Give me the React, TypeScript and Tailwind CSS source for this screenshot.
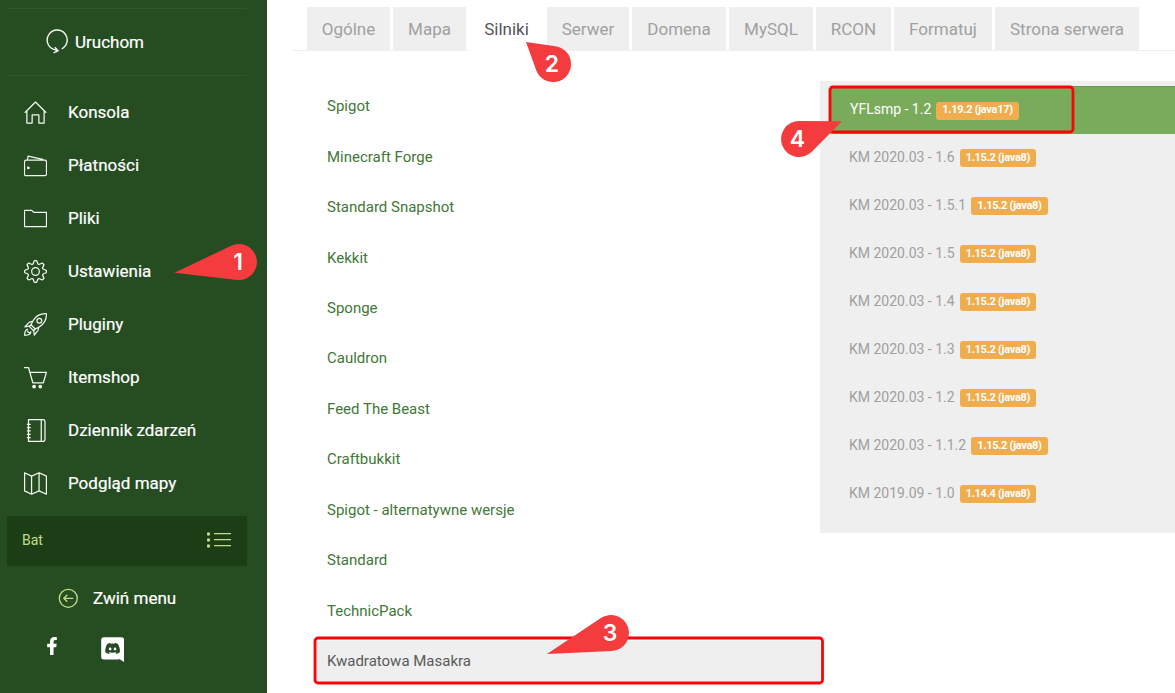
import type { ReactNode } from "react";
import { FaFacebookF, FaDiscord } from "react-icons/fa";

function Icon({ children }: { children: ReactNode }) {
  return (
    <svg width="23" height="23" viewBox="0 0 24 24" fill="none" stroke="#f4f7f3" strokeWidth="1.3" strokeLinejoin="round" className="shrink-0">
      {children}
    </svg>
  );
}

function gearPath() {
  const pts: string[] = [];
  for (let i = 0; i < 8; i++) {
    const a = (i * Math.PI) / 4;
    const p = (r: number, d: number) =>
      `${(12 + r * Math.sin(a + d)).toFixed(2)} ${(12 - r * Math.cos(a + d)).toFixed(2)}`;
    pts.push(`${i ? "L" : "M"}${p(8.7, -0.27)}L${p(11.2, -0.12)}Q${p(11.6, 0)} ${p(11.2, 0.12)}L${p(8.7, 0.27)}Q${p(7.6, 0.39)} ${p(8.7, 0.51)}`);
  }
  return pts.join("") + "Z";
}

const menu: { label: string; icon: ReactNode }[] = [
  { label: "Konsola", icon: <path d="M.8 12.3 12 1.1l11.200 11.200M3 10.500V23h5.500v-8.500h7V23H21V10.500" /> },
  {
    label: "Płatności",
    icon: (
      <>
        <path d="M3.500 6.500 4.300 2.200l15.200 3.300v1M2.500 6.500h19q2 0 2 2V21q0 1.500-1.500 1.500H2Q.5 22.500.5 21V8.500q0-2 2-2Z" />
        <circle cx="4.500" cy="14.500" r=".8" fill="#f4f7f3" />
      </>
    ),
  },
  { label: "Pliki", icon: <path d="M.5 3.500H8l2.200 2h13.300v15H.5Z" /> },
  {
    label: "Ustawienia",
    icon: (
      <>
        <path d={gearPath()} />
        <circle cx="12" cy="12" r="4" />
      </>
    ),
  },
  {
    label: "Pluginy",
    icon: (
      <>
        <path d="M23.300.7Q14 .3 9.500 8L7.300 12.200l4.500 4.500L16 14.500Q24 9.500 23.300.7ZM9.200 8.700Q6 8.700 4.500 10.500L.9 14.400l4-.7 2.900-1.200M15.300 14.800q0 3.200-1.800 4.700l-2.700 3.600-.6-4 1.200-2.700M7.300 12.200 5.500 14l4.500 4.500 1.800-1.800M4.200 16.800Q.6 17.500.7 23.300q5.800.1 6.500-3.500-1 1-2.200.5-1.500-.8-1.200-2" />
        <circle cx="16" cy="8" r="2.500" />
      </>
    ),
  },
  {
    label: "Itemshop",
    icon: (
      <>
        <path d="M0 1.600h4.700l4.500 15.900h11L23.400 6.600H6.200" />
        <circle cx="10.500" cy="21.500" r="1.300" fill="#fff" />
        <circle cx="17" cy="21.500" r="1.300" fill="#fff" />
      </>
    ),
  },
  {
    label: "Dziennik zdarzeń",
    icon: <path d="M4.700.6h15q2.200 0 2.200 2v18.800q0 2-2.200 2h-15ZM18 .6v22.800M3 5.500h4M3 9h4M3 12.500h4M3 16h4M3 19.500h4" />,
  },
  {
    label: "Podgląd mapy",
    icon: <path d="m.6.8 7.300 3.500L15.700.8l7.700 3.500v18.900l-7.700-3.500-7.800 3.500-7.300-3.500ZM7.900 4.300v18.900M15.700.8v18.900" />,
  },
];

const tabs = [
  { label: "Ogólne", width: "w-[83px]" },
  { label: "Mapa", width: "w-[73px]" },
  { label: "Silniki", width: "w-[75px]" },
  { label: "Serwer", width: "w-[82px]" },
  { label: "Domena", width: "w-[94px]" },
  { label: "MySQL", width: "w-[84px]" },
  { label: "RCON", width: "w-[75px]" },
  { label: "Formatuj", width: "w-[98px]" },
  { label: "Strona serwera", width: "w-[144px]" },
];

const engines = [
  "Spigot", "Minecraft Forge", "Standard Snapshot", "Kekkit", "Sponge", "Cauldron",
  "Feed The Beast", "Craftbukkit", "Spigot - alternatywne wersje", "Standard", "TechnicPack", "Kwadratowa Masakra",
];

const versions = [
  ["YFLsmp - 1.2", "1.19.2 (java17)"],
  ["KM 2020.03 - 1.6", "1.15.2 (java8)"],
  ["KM 2020.03 - 1.5.1", "1.15.2 (java8)"],
  ["KM 2020.03 - 1.5", "1.15.2 (java8)"],
  ["KM 2020.03 - 1.4", "1.15.2 (java8)"],
  ["KM 2020.03 - 1.3", "1.15.2 (java8)"],
  ["KM 2020.03 - 1.2", "1.15.2 (java8)"],
  ["KM 2020.03 - 1.1.2", "1.15.2 (java8)"],
  ["KM 2019.09 - 1.0", "1.14.4 (java8)"],
];

function Sidebar() {
  return (
    <aside className="h-full w-[267px] shrink-0 bg-[#254d21] pt-2 pr-5 pl-[7px] text-[17px] text-white">
      <div className="flex h-[68px] items-center border-y border-[#2e5a2a] pl-[39px]">
        <svg width="23" height="25" viewBox="0 0 23 25" fill="none" stroke="#f4f7f3" strokeWidth="1.4" className="-mt-0.5">
          <path d="M15.800 19.900A10 10 0 1 0 7.200 20.200L12 21.800M8.800 18.300l3.300 3.500-4.500 2" />
        </svg>
        <span className="mt-0.5 ml-[6px] [-webkit-text-stroke:0.2px_white]">Uruchom</span>
      </div>
      <nav className="pt-[10px]">
        {menu.map((m) => (
          <a key={m.label} className="flex h-[53px] items-center pl-[17px]">
            <Icon>{m.icon}</Icon>
            <span className="ml-[21px] [-webkit-text-stroke:0.2px_white]">{m.label}</span>
          </a>
        ))}
      </nav>
      <div className="mt-[6px] flex h-[50px] items-center justify-between bg-[#1c3e17] pr-4 pb-0.5 pl-[15px] text-[14px] text-[#c5dc86]">
        <span>Bat</span>
        <svg width="24" height="16" viewBox="0 0 24 16" fill="#c5dc86" className="-mt-px">
          <circle cx="1.500" cy="2" r="1.700" />
          <circle cx="1.500" cy="8" r="1.700" />
          <circle cx="1.500" cy="14" r="1.700" />
          <path d="M7 1h17v1.300H7ZM7 7h17v1.300H7ZM7 13h17v1.300H7Z" />
        </svg>
      </div>
      <div className="mt-[22px] flex h-5 items-center pl-[51px]">
        <svg width="20" height="20" viewBox="0 0 20 20" fill="none" stroke="#c5dc86" strokeWidth="1.300">
          <circle cx="10.300" cy="10.300" r="9" />
          <path d="M15.300 10.300H5.800M9.300 6.800 5.800 10.300 9.300 13.800" />
        </svg>
        <span className="mt-0.5 ml-[15px] [-webkit-text-stroke:0.2px_white]">Zwiń menu</span>
      </div>
      <div className="mt-[29px] flex items-start pl-[39px]">
        <FaFacebookF size={18} className="w-3" />
        <svg width="24" height="26" viewBox="0 0 24 26" className="ml-[43px]">
          <path fill="#fff" d="M3 .2h17.500q2.500 0 2.500 2.500V25L17.500 21.500l.6 1H3Q.2 22.500.2 20V2.700Q.2.2 3 .2Z" />
          <svg x="3.600" y="3.500" width="16" height="16">
            <FaDiscord size={16} color="#254d21" />
          </svg>
        </svg>
      </div>
    </aside>
  );
}

const pins = [
  { n: "1", x: 238, y: 262, d: "M174.500 272.700 231.300 245.700A18 18 0 1 1 236.900 279.900Z" },
  { n: "2", x: 552, y: 64, d: "M526 42 555.500 46.200A18 18 0 1 1 536.100 70.100Z" },
  { n: "3", x: 610, y: 633, d: "M547 654 600.900 618.100A18 18 0 1 1 611.900 651Z" },
  { n: "4", x: 797.5, y: 139, d: "M842 121.300 811.800 151.700A18 18 0 1 1 799.200 121Z" },
];

function Annotations() {
  return (
    <svg className="pointer-events-none absolute inset-0" width="1175" height="693" viewBox="0 0 1175 693">
      <rect x="315" y="638" width="507.500" height="45" rx="3" fill="none" stroke="#fe0306" strokeWidth="2.800" />
      <rect x="830" y="87" width="243" height="45" rx="3" fill="none" stroke="#fe0306" strokeWidth="2.800" />
      {pins.map((p) => (
        <g key={p.n}>
          <path d={p.d} fill="#f43b3d" />
          <text x={p.x} y={p.y + 8} textAnchor="middle" fill="#fff" fontSize="23" fontWeight="600" fontFamily="Inter, sans-serif">
            {p.n}
          </text>
        </g>
      ))}
    </svg>
  );
}

export default function App() {
  return (
    <div className="relative flex h-[693px] w-[1175px] overflow-hidden bg-white font-['Roboto',sans-serif] whitespace-nowrap">
      <Sidebar />
      <main className="min-w-0 flex-1 pt-[7px] pl-[25px]">
        <div className="flex h-11 gap-[3px] border-b border-[#eeeeee] pl-[15px] text-[17px] text-[#a0a0a0]">
          {tabs.map((t) => (
            <div
              key={t.label}
              className={`flex shrink-0 items-center justify-center ${t.width} ${
                t.label === "Silniki" ? "h-11 bg-white pt-px text-[#56535c]" : "h-[43px] bg-[#efefef] pt-0.5"
              }`}
            >
              {t.label}
            </div>
          ))}
        </div>
        <div className="flex items-start">
          <ul className="w-[528px] shrink-0 pt-[35px] pl-[23px] text-[15px] text-[#3f7837]">
            {engines.map((e) => (
              <li
                key={e}
                className={`mb-[9.450px] flex h-[41px] items-center pl-3 ${
                  e === "Kwadratowa Masakra" ? "bg-[#efefef] text-[#5a5a5a]" : ""
                }`}
              >
                {e}
              </li>
            ))}
          </ul>
          <ul className="mt-[30px] h-[452px] flex-1 bg-[#efefef] pt-[5px] pl-[10px] text-[14px] text-[#a0a0a0]">
            {versions.map(([name, java], i) => (
              <li
                key={name}
                className={`flex h-12 items-center ${i === 0 ? "border-t border-[#699b4f] bg-[#79ab5b] pl-5 text-white" : "pl-[19px]"}`}
              >
                <span className="-mt-0.5">{name}</span>
                <span className="ml-[5px] flex h-[18px] items-center rounded-[3px] bg-[#f0ad4e] px-[6px] text-[11px] font-bold tracking-[-0.28px] text-white">
                  {java}
                </span>
              </li>
            ))}
          </ul>
        </div>
      </main>
      <Annotations />
    </div>
  );
}
